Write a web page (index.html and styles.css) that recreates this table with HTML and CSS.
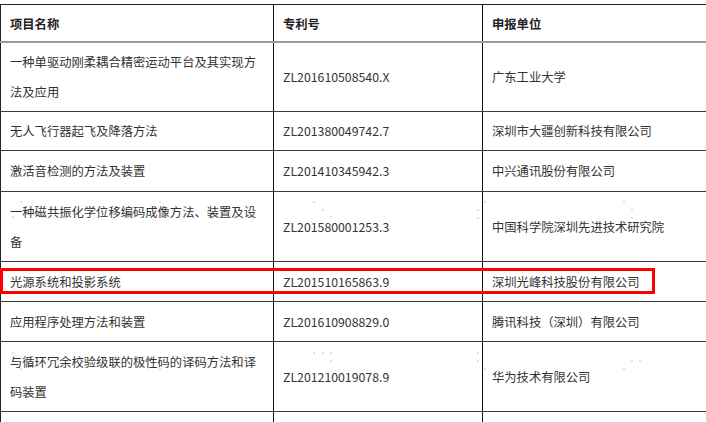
FILE: index.html
```html
<!DOCTYPE html>
<html lang="zh-CN">
<head>
<meta charset="utf-8">
<title>专利列表</title>
<link rel="stylesheet" href="styles.css">
</head>
<body>
<div class="sheet">
  <table class="patents">
    <colgroup>
      <col class="c-name">
      <col class="c-no">
      <col class="c-unit">
    </colgroup>
    <thead>
      <tr class="head">
        <th>项目名称</th>
        <th>专利号</th>
        <th>申报单位</th>
      </tr>
    </thead>
    <tbody>
      <tr class="tall">
        <td>一种单驱动刚柔耦合精密运动平台及其实现方法及应用</td>
        <td>ZL201610508540.X</td>
        <td>广东工业大学</td>
      </tr>
      <tr class="short">
        <td>无人飞行器起飞及降落方法</td>
        <td>ZL201380049742.7</td>
        <td>深圳市大疆创新科技有限公司</td>
      </tr>
      <tr class="wide">
        <td>激活音检测的方法及装置</td>
        <td>ZL201410345942.3</td>
        <td>中兴通讯股份有限公司</td>
      </tr>
      <tr class="tall">
        <td>一种磁共振化学位移编码成像方法、装置及设备</td>
        <td>ZL201580001253.3</td>
        <td>中国科学院深圳先进技术研究院</td>
      </tr>
      <tr class="mid">
        <td>光源系统和投影系统</td>
        <td>ZL201510165863.9</td>
        <td>深圳光峰科技股份有限公司</td>
      </tr>
      <tr class="mid">
        <td>应用程序处理方法和装置</td>
        <td>ZL201610908829.0</td>
        <td>腾讯科技（深圳）有限公司</td>
      </tr>
      <tr class="tall">
        <td>与循环冗余校验级联的极性码的译码方法和译码装置</td>
        <td>ZL201210019078.9</td>
        <td>华为技术有限公司</td>
      </tr>
      <tr class="last">
        <td>&nbsp;</td>
        <td>&nbsp;</td>
        <td>&nbsp;</td>
      </tr>
    </tbody>
  </table>
  <div class="highlight" aria-hidden="true"></div>
  <div class="dots" aria-hidden="true">
    <span class="dot" style="left:20px;top:201px"></span>
    <span class="dot" style="left:12px;top:216px"></span>
    <span class="dot" style="left:159px;top:201px"></span>
    <span class="dot" style="left:167px;top:216px"></span>
    <span class="dot" style="left:313px;top:201px"></span>
    <span class="dot" style="left:322px;top:209px"></span>
    <span class="dot" style="left:330px;top:216px"></span>
    <span class="dot" style="left:484px;top:201px"></span>
    <span class="dot" style="left:477px;top:209px"></span>
    <span class="dot" style="left:477px;top:217px"></span>
    <span class="dot" style="left:623px;top:201px"></span>
    <span class="dot" style="left:631px;top:209px"></span>
    <span class="dot" style="left:631px;top:217px"></span>
    <span class="dot" style="left:12px;top:352px"></span>
    <span class="dot" style="left:20px;top:368px"></span>
    <span class="dot" style="left:159px;top:368px"></span>
    <span class="dot" style="left:313px;top:352px"></span>
    <span class="dot" style="left:322px;top:352px"></span>
    <span class="dot" style="left:330px;top:352px"></span>
    <span class="dot" style="left:330px;top:360px"></span>
    <span class="dot" style="left:477px;top:352px"></span>
    <span class="dot" style="left:477px;top:360px"></span>
    <span class="dot" style="left:484px;top:368px"></span>
    <span class="dot" style="left:623px;top:368px"></span>
    <span class="dot" style="left:631px;top:360px"></span>
    <span class="dot" style="left:639px;top:360px"></span>
  </div>
</div>
</body>
</html>
```
FILE: styles.css
```css
html, body {
  margin: 0;
  padding: 0;
  background: #ffffff;
  overflow: hidden;
}

body {
  font-family: "Noto Sans CJK SC", "Noto Sans", sans-serif;
  font-size: 12.3px;
  color: #333333;
}

.sheet {
  position: relative;
  box-sizing: border-box;
  width: 706px;
  height: 422px;
  overflow: hidden;
  padding-top: 4px;
}

.patents {
  border-collapse: collapse;
  table-layout: fixed;
  width: 706px;
  border-top: 1.5px solid #222222;
}

.c-name { width: 273px; }
.c-no { width: 209px; }
.c-unit { width: 224px; }

.patents th,
.patents td {
  padding: 0 9px;
  line-height: 30px;
  text-align: left;
  vertical-align: middle;
  border-left: 1px solid #111111;
  border-bottom: 1px solid #3a3a3a;
  word-break: break-all;
}

.patents th:first-child,
.patents td:first-child {
  border-left: 1.5px solid #222222;
}

.patents th {
  font-weight: bold;
  color: #222222;
  padding-top: 3px;
  border-bottom: 2px solid #9a9a9a;
}

.head { height: 37px; }
.short { height: 39px; }
.mid { height: 40px; }
.wide { height: 41px; }
.tall { height: 70px; }
.last { height: 12px; }

.highlight {
  position: absolute;
  left: 0;
  top: 268px;
  width: 649px;
  height: 20px;
  border: 3px solid #ff0000;
}

.dots {
  position: absolute;
  inset: 0;
  pointer-events: none;
}

.dot {
  position: absolute;
  width: 2px;
  height: 2px;
  border-radius: 1px;
  background: #ddd2f2;
}
```
